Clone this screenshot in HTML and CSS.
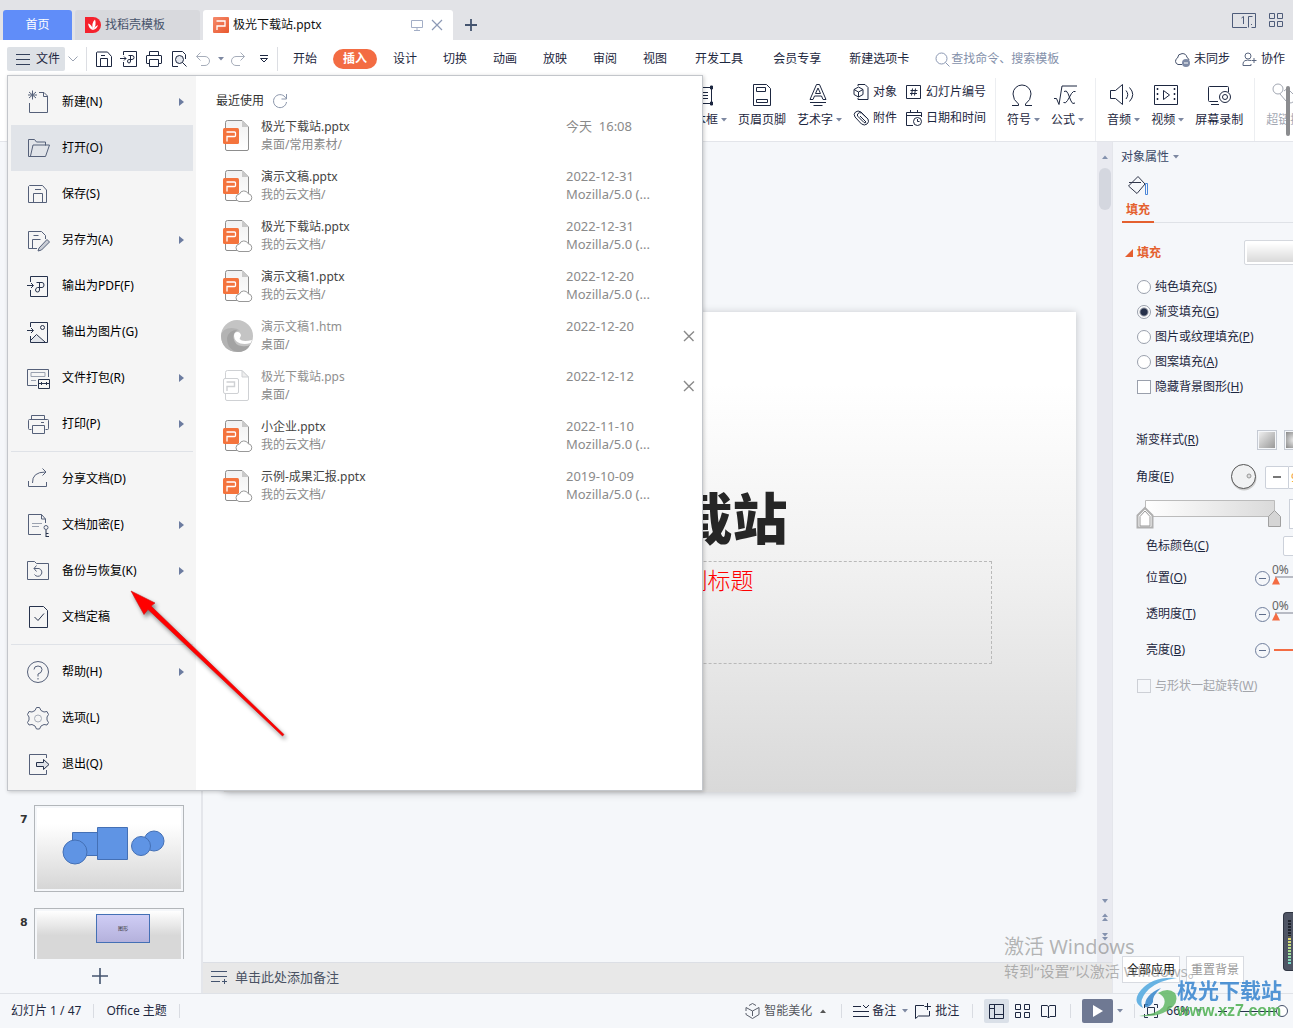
FILE: index.html
```html
<!DOCTYPE html>
<html lang="zh-CN">
<head>
<meta charset="utf-8">
<title>极光下载站.pptx</title>
<link rel="stylesheet" href="styles.css">
</head>
<body>
<svg class="defs" aria-hidden="true">
  <defs>
    <linearGradient id="paper" x1="0" y1="0" x2="0" y2="1"><stop offset="0" stop-color="#f1f1f1"/><stop offset="1" stop-color="#fff"/></linearGradient>
    <linearGradient id="logo" x1="0" y1="0" x2="1" y2="1"><stop offset="0" stop-color="#f58a6c"/><stop offset="1" stop-color="#e9582d"/></linearGradient>
  </defs>
  <symbol id="i-ppt" viewBox="0 0 32 34">
    <path d="M4.500 3.500a2 2 0 0 1 2-2H21l6.500 6.500v22a1.500 1.500 0 0 1-1.500 1.500H6a1.500 1.500 0 0 1-1.500-1.500z" fill="url(#paper)" stroke="#8d8d8d"/>
    <path d="M21 1.500V8h6.500z" fill="#c9c9c9"/>
    <rect x="2" y="9" width="16" height="16" rx="1.500" fill="#f4733c"/>
    <path d="M5.500 13H13.500q1 0 1 1v2.500q0 1-1 1H6v5" fill="none" stroke="#fff" stroke-width="1.300"/>
  </symbol>
  <symbol id="i-cloud" viewBox="0 0 32 34">
    <path d="M18 32.500a3.800 3.800 0 0 1 .5-7.500 4.700 4.700 0 0 1 8.700-.3 4 4 0 0 1 .8 7.800z" fill="#fff" stroke="#999"/>
  </symbol>
  <symbol id="i-caret" viewBox="0 0 6 4"><path d="M0 0h6L3 3.500z" fill="currentColor"/></symbol>
  <symbol id="i-save" viewBox="0 0 18 18"><path d="M1.500 2.500v14h15V6.500l-4-4.500H2zM5.500 16.500v-8h7v8M6 5.500h4" fill="none" stroke="currentColor"/></symbol>
  <symbol id="i-pdf" viewBox="0 0 24 24"><path d="M4.500 8V2.500h17v20h-17V16M1 11.500h6M5 9l2.500 2.500L5 14M10.500 8.500h5.500q2 0 2 2.500t-2 2.500h-3M13.500 8.500V16q0 2-2 2t-2-2 2-2.500h2" fill="none" stroke="currentColor"/></symbol>
  <symbol id="i-print" viewBox="0 0 24 24"><path d="M5.500 7.500v-4h13v4M5.500 17.500h-2q-1 0-1-1v-8q0-1 1-1h18q1 0 1 1v8q0 1-1 1h-2M6.500 13.500h12v8h-12zM15 10.500h3" fill="none" stroke="currentColor"/></symbol>
</svg>

<div class="app">
  <header class="titlebar">
    <button class="tab tab-home">首页</button>
    <button class="tab tab-template">
      <svg width="16" height="16" viewBox="0 0 16 16"><path d="M0 0h8a8 8 0 0 1 0 16H0z" fill="#f5222d"/><path d="M8 13Q4 12 3 6.500q4 1 5 6.500M8 13Q6 6 10 2.500 12 8 8 13M8 13q2-4 5-5-1 4-5 5" fill="#fff"/></svg>
      找稻壳模板
    </button>
    <div class="tab tab-file">
      <svg width="16" height="16" viewBox="0 0 16 16"><rect width="16" height="16" rx="1" fill="url(#logo)"/><path d="M3.500 4H12v5H4v4" fill="none" stroke="#fff" stroke-width="1.300"/></svg>
      <span class="tab-name">极光下载站.pptx</span>
      <svg width="12" height="12" viewBox="0 0 12 12" fill="none" stroke="#a3aec6"><path d="M.5 1.500h11v7H.5zM6 8.500v2.500M3 11.500h6"/></svg>
      <button class="bare" aria-label="关闭"><svg width="12" height="12" viewBox="0 0 12 12"><path d="M1 1l10 10M11 1L1 11" stroke="#8c99b5" stroke-width="1.200"/></svg></button>
    </div>
    <button class="bare add-tab" aria-label="新建标签"><svg width="12" height="12" viewBox="0 0 12 12"><path d="M6 0v12M0 6h12" stroke="#44546f" stroke-width="1.800"/></svg></button>
    <div class="window-tools">
      <svg width="24" height="15" viewBox="0 0 24 15" fill="none" stroke="#4e5c7a"><path d="M15 14.500H.5V.5h23v14h-4M16.500 14.500v-11h4M9.500 5l2-1.500V11M19 11.500h1"/></svg>
      <svg width="14" height="14" viewBox="0 0 14 14" fill="none" stroke="#4e5c7a"><path d="M.5.5h5v5h-5zM8.500.5h5v5h-5zM.5 8.500h5v5h-5zM8.500 8.500h5v5h-5z"/></svg>
    </div>
  </header>

  <nav class="menubar">
    <button class="file-button"><svg width="14" height="12" viewBox="0 0 14 12"><path d="M0 1.500h14M0 6.500h14M0 11.500h14" stroke="#33405a"/></svg>文件</button>
    <svg class="chev" width="10" height="6" viewBox="0 0 10 6"><path d="M.5.5L5 5 9.500.5" fill="none" stroke="#9ba3b2"/></svg>
    <span class="rule"></span>
    <div class="quick">
      <button class="bare" aria-label="保存"><svg width="18" height="18"><use href="#i-save"/></svg></button>
      <button class="bare" aria-label="输出为PDF"><svg width="18" height="18" viewBox="0 0 18 18" fill="none" stroke="currentColor"><path d="M3.500 5V1.500h13v15h-13V12M0 8.500h6M4 6.500l2 2-2 2M8.500 5.500H12q2 0 2 2t-2 2h-2M10.500 5.500V11q0 2-1.500 2t-1.500-2 3-1.500"/></svg></button>
      <button class="bare" aria-label="打印"><svg width="18" height="18" viewBox="0 0 18 18" fill="none" stroke="currentColor"><path d="M4.500 5.500v-4h9v4M4.500 13.500H2q-.5 0-.5-.5V6q0-.5.5-.5h14q.5 0 .5.500v7q0 .5-.5.500h-2.500M4.500 9.500h9v7h-9z"/></svg></button>
      <button class="bare" aria-label="打印预览"><svg width="18" height="18" viewBox="0 0 18 18" fill="none" stroke="currentColor"><path d="M8 16.500H2.500v-15h10l3 3V9"/><circle cx="9.500" cy="9.500" r="4" fill="#e5e8ee"/><path d="M12.500 12.500l4 4"/></svg></button>
      <button class="bare dim undo" aria-label="撤销"><svg width="14" height="14" viewBox="0 0 14 14" fill="none" stroke="currentColor"><path d="M4.500.5l-4 4 4 4M.5 4.500H9a4.500 4.500 0 0 1 0 9H5"/></svg><svg class="caret" width="6" height="4"><use href="#i-caret"/></svg></button>
      <button class="bare dim" aria-label="恢复"><svg width="14" height="14" viewBox="0 0 14 14" fill="none" stroke="currentColor"><path d="M9.500.5l4 4-4 4M13.500 4.500H5a4.500 4.500 0 0 0 0 9h4"/></svg></button>
      <button class="bare more" aria-label="更多"><svg width="8" height="8" viewBox="0 0 8 8" fill="none" stroke="currentColor"><path d="M0 .5h8M.5 3.500h7L4 7z"/></svg></button>
    </div>
    <span class="rule"></span>
    <div class="menu-tabs">
      <button>开始</button><button class="active"><b>插入</b></button><button>设计</button><button>切换</button><button>动画</button><button>放映</button><button>审阅</button><button>视图</button><button class="wide">开发工具</button><button class="wide">会员专享</button><button>新建选项卡</button>
    </div>
    <label class="search"><svg width="15" height="15" viewBox="0 0 15 15" fill="none" stroke="#8b98b3"><circle cx="6.500" cy="6.500" r="5.500"/><path d="M10.500 10.500l4 4"/></svg><input type="text" placeholder="查找命令、搜索模板" aria-label="查找命令"></label>
    <div class="account">
      <button class="bare"><svg width="16" height="16" viewBox="0 0 16 16"><path d="M8 13.500H4A3.500 3.500 0 0 1 3.500 7 4.800 4.800 0 0 1 13 6.500 3.500 3.500 0 0 1 15 9" fill="none" stroke="#44506a"/><circle cx="12" cy="12" r="4" fill="#7f8ba6"/><path d="M10 12h4" stroke="#fff"/></svg>未同步</button>
      <button class="bare"><svg width="15" height="15" viewBox="0 0 15 15" fill="none" stroke="#5b6780"><circle cx="6" cy="4" r="3"/><path d="M9 8.500Q1 7 1 12v1.500h8V12M12 6v5M9.500 8.500h5"/></svg>协作</button>
    </div>
  </nav>

  <section class="ribbon">
    <button class="tool"><svg width="24" height="24" viewBox="0 0 24 24" fill="none" stroke="currentColor"><path d="M3 4.500h18M3 20.500h18M4.500 4v17M20.500 4v17M9 9.500h8M9 12.500h8M9 15.500h8"/><path d="M2.500 3h3v3h-3zM19.500 3h2v3h-2zM19.500 19h2v3h-2z" fill="currentColor"/></svg><span>文本框<svg class="caret" width="6" height="4"><use href="#i-caret"/></svg></span></button>
    <button class="tool"><svg width="24" height="24" viewBox="0 0 24 24" fill="none" stroke="currentColor"><path d="M3.500 1.500h13l4 4v17h-17zM6.500 4.500h9v4h-9zM6.500 16.500h11v3h-11z"/></svg><span>页眉页脚</span></button>
    <button class="tool"><svg width="24" height="24" viewBox="0 0 24 24" fill="none" stroke="currentColor"><path d="M10.500 1.500h3l6.500 15h-3l-1.500-3.500h-7L7 16.500H4zM12 5l-2.500 5.500h5zM4 19.500h16M7.500 22.500h9"/></svg><span>艺术字<svg class="caret" width="6" height="4"><use href="#i-caret"/></svg></span></button>
    <div class="tool-stack">
      <button class="small-tool"><svg width="16" height="16" viewBox="0 0 16 16" fill="none" stroke="currentColor"><path d="M5 2V.5h7l3 3v12H5V14M5.500 3L10 5.500v5L5.500 13 1 10.500v-5zM1 5.500L5.500 8 10 5.500M5.500 8v5"/></svg>对象</button>
      <button class="small-tool"><svg width="16" height="16" viewBox="0 0 16 16" fill="none" stroke="currentColor"><path d="M14 8L8 2Q5 0 2.500 2T2 7l6.500 7q3 2 5.500 0t1-5L8.500 3Q6.500 2 5 3.500t0 3l6 6q1.500 1 2-.5L7 6"/></svg>附件</button>
    </div>
    <div class="tool-stack">
      <button class="small-tool"><svg width="16" height="16" viewBox="0 0 16 16" fill="none" stroke="currentColor"><path d="M.5 1.500h14v13H.5zM4.500 6.500h7M4 9.500h7M6.500 4.500l-1 7M9.500 4.500l-1 7"/></svg>幻灯片编号</button>
      <button class="small-tool"><svg width="16" height="16" viewBox="0 0 16 16" fill="none" stroke="currentColor"><path d="M7 15.500H.5v-13h15V7M.5 5.500h15M4.500 0v3M11.500 0v3"/><circle cx="11.500" cy="11.500" r="4"/><path d="M11.500 9v2.500h2"/></svg>日期和时间</button>
    </div>
    <span class="split"></span>
    <button class="tool"><svg width="24" height="24" viewBox="0 0 24 24" fill="none" stroke="currentColor"><path d="M2 22.500h6.500V21Q3 17 3 11a9 9 0 0 1 18 0Q21 17 15.500 21v1.500H22"/></svg><span>符号<svg class="caret" width="6" height="4"><use href="#i-caret"/></svg></span></button>
    <button class="tool"><svg width="24" height="24" viewBox="0 0 24 24" fill="none" stroke="currentColor"><path d="M0 15.500h2.500l2.500 6 3-18.500h15M10 8.500q2.500-2 4 2l3 7.500q1.500 4 4 2M21.500 8.500q-2-1-4 2l-4 7q-2 3.500-4 2"/></svg><span>公式<svg class="caret" width="6" height="4"><use href="#i-caret"/></svg></span></button>
    <span class="split"></span>
    <button class="tool"><svg width="24" height="24" viewBox="0 0 24 24" fill="none" stroke="currentColor"><path d="M.5 7.500h5l7-6v20l-7-6h-5zM16 7.500q3.500 4 0 8.500M19.500 4.500q6.500 7 0 14"/></svg><span>音频<svg class="caret" width="6" height="4"><use href="#i-caret"/></svg></span></button>
    <button class="tool"><svg width="24" height="24" viewBox="0 0 24 24" fill="none" stroke="currentColor"><path d="M.5 2.500h23v19H.5z"/><path d="M9.500 7.500l6 4.500-6 4.500z"/><path d="M3.500 5v14M20.500 5v14" stroke-dasharray="2 3" stroke-width="1.500"/></svg><span>视频<svg class="caret" width="6" height="4"><use href="#i-caret"/></svg></span></button>
    <button class="tool"><svg width="24" height="24" viewBox="0 0 24 24" fill="none" stroke="currentColor"><path d="M11 18.500H2.500q-1 0-1-1v-13q0-1 1-1h18q1 0 1 1V9M4 21.500h8"/><circle cx="18" cy="14" r="5.500"/><circle cx="18" cy="14" r="2.500"/></svg><span>屏幕录制</span></button>
    <span class="split"></span>
    <button class="tool faded"><svg width="24" height="24" viewBox="0 0 24 24" fill="none" stroke="currentColor"><circle cx="6" cy="6" r="5"/><path d="M8 11l6 7a5 5 0 0 0 8-6l-5-5q-3-2-5 1"/></svg><span>超链接</span></button>
    <span class="ribbon-scroll"></span>
  </section>

  <main class="workspace">
    <aside class="outline">
      <ol class="thumbs">
        <li><span class="num">7</span><div class="thumb"><svg viewBox="0 0 144 81" fill="#5f94e4" stroke="#4470b5"><path d="M35.500 24.500h26v23h-26z"/><path d="M60.500 19.500h30v32h-30z"/><circle cx="38" cy="44" r="12"/><circle cx="117" cy="33" r="10"/><circle cx="104" cy="38" r="9.500"/></svg></div></li>
        <li class="cut"><span class="num">8</span><div class="thumb shape-thumb"><span class="mini">图形</span></div></li>
      </ol>
      <button class="bare add-slide" aria-label="新建幻灯片"><svg width="16" height="16" viewBox="0 0 16 16"><path d="M8 0v16M0 8h16" stroke="#44546f" stroke-width="1.600"/></svg></button>
    </aside>

    <section class="center">
      <div class="stage">
        <div class="canvas">
          <article class="slide">
            <h1>极光下载站</h1>
            <p>单击此处添加副标题</p>
          </article>
        </div>
        <div class="scrollbar">
          <svg width="6" height="4" viewBox="0 0 6 4"><path d="M0 4h6L3 .5z" fill="#8492ae"/></svg>
          <span class="scroll-thumb"></span>
          <svg class="scroll-end" width="6" height="44" viewBox="0 0 6 44" fill="#8492ae"><path d="M0 1h6L3 5zM0 19h6L3 15.500zM0 23h6l-3-3.500zM0 35h6l-3 3.500zM0 39h6l-3 3.500z"/></svg>
        </div>
      </div>
      <div class="notes"><svg width="17" height="14" viewBox="0 0 17 14" stroke="#44546f"><path d="M0 1.500h16M0 6.500h16M0 11.500h9M11 11.500h5M13.500 9v5"/></svg>单击此处添加备注</div>
    </section>

    <aside class="props">
      <h2>对象属性<svg class="caret" width="6" height="4"><use href="#i-caret"/></svg></h2>
      <div class="prop-tabs"><button><svg width="22" height="22" viewBox="0 0 22 22" fill="none" stroke="#30364a"><path d="M1.500 11L11 1.500l7 7.500-8 9.500zM2 7.500h12"/><path d="M18.500 8.500h2v11h-2z" stroke="#4a86d8"/></svg>填充</button></div>
      <h3><svg width="8" height="8" viewBox="0 0 8 8"><path d="M8 0v8H0z" fill="#e45f30"/></svg>填充<span class="swatch"></span></h3>
      <div class="choices">
        <label><input type="radio" name="fill">纯色填充(<u>S</u>)</label>
        <label><input type="radio" name="fill" checked>渐变填充(<u>G</u>)</label>
        <label><input type="radio" name="fill">图片或纹理填充(<u>P</u>)</label>
        <label><input type="radio" name="fill">图案填充(<u>A</u>)</label>
        <label><input type="checkbox">隐藏背景图形(<u>H</u>)</label>
      </div>
      <div class="row style-row"><span>渐变样式(<u>R</u>)</span><button class="grad" aria-label="线性渐变"></button><button class="grad radial" aria-label="射线渐变"></button></div>
      <div class="row angle-row"><span>角度(<u>E</u>)</span><svg width="28" height="28" viewBox="0 0 28 28"><circle cx="14" cy="15" r="12.500" fill="#ccc"/><circle cx="13.500" cy="13.500" r="12" fill="#f1f2f3" stroke="#555"/><circle cx="19" cy="13" r="2" fill="#ddd" stroke="#999"/></svg><button class="step" aria-label="减小角度"><svg width="8" height="2"><path d="M0 1h8" stroke="#777" stroke-width="2"/></svg></button><input class="angle" type="text" value="90" aria-label="角度"></div>
      <div class="row bar-row"><svg width="146" height="30" viewBox="0 0 146 30"><defs><linearGradient id="ramp"><stop offset="0" stop-color="#fff"/><stop offset="1" stop-color="#dadada"/></linearGradient></defs><path d="M9.500 1.500h129v16H9.500z" fill="url(#ramp)" stroke="#bbb"/><path d="M1.500 16.500L9 9l7.500 7.500V28.500h-15z" fill="#fff" stroke="#b0b0b0" stroke-width="2"/><path d="M4 27V17.500L9 12l5 5.500V27z" fill="#fff" stroke="#999"/><path d="M132.500 17.500L138.500 11.500l6 6v10h-12z" fill="#d5d5d5" stroke="#a0a0a0"/></svg><span class="stop-tools"></span></div>
      <div class="row color-row"><span>色标颜色(<u>C</u>)</span><button class="color" aria-label="色标颜色"></button></div>
      <div class="row slide-row"><label for="pos">位置(<u>O</u>)</label><button class="minus" aria-label="减小位置"></button><span class="range"><output>0%</output><input id="pos" type="range" value="0"></span></div>
      <div class="row slide-row"><label for="alpha">透明度(<u>T</u>)</label><button class="minus" aria-label="减小透明度"></button><span class="range"><output>0%</output><input id="alpha" type="range" value="0"></span></div>
      <div class="row slide-row"><label for="light">亮度(<u>B</u>)</label><button class="minus" aria-label="减小亮度"></button><input id="light" class="warm" type="range" value="100"></div>
      <label class="rotate"><input type="checkbox" disabled>与形状一起旋转(<u>W</u>)</label>
      <div class="prop-buttons"><button>全部应用</button><button disabled>重置背景</button></div>
    </aside>
  </main>

  <footer class="status">
    <span>幻灯片 1 / 47</span><span class="tick"></span><span>Office 主题</span><span class="tick"></span>
    <div class="status-right">
      <button class="bare soft"><svg width="15" height="16" viewBox="0 0 15 16" fill="none" stroke="#5a5f6b"><path d="M4 2.500L7.500.5 11 2.500M1 8V4.500L7.500 8 14 4.500v7L7.500 15.500 1 11.500V10M7.500 8v5"/></svg>智能美化<svg class="up" width="6" height="4" viewBox="0 0 6 4"><path d="M0 4h6L3 .5z" fill="#555"/></svg></button>
      <span class="tick"></span>
      <button class="bare remark"><svg width="17" height="14" viewBox="0 0 17 14" fill="none" stroke="currentColor"><path d="M0 2.500h8M0 7.500h16M0 12.500h16M10 1l3 3 3-3"/></svg>备注<svg class="caret" width="6" height="4"><use href="#i-caret"/></svg></button>
      <button class="bare comment"><svg width="16" height="16" viewBox="0 0 16 16" fill="none" stroke="currentColor"><path d="M9 2.500H.5v13l3-2.500h11V8M9.500 3.500h6.500M12.500 0v7"/></svg>批注</button>
      <span class="tick"></span>
      <div class="views">
        <button class="bare on" aria-label="普通视图"><svg width="15" height="15" viewBox="0 0 15 15" fill="none" stroke="currentColor"><path d="M.5.5h14v14H.5zM5.500.5v14M5.500 10.500h9M.5 4.500h5"/></svg></button>
        <button class="bare" aria-label="幻灯片浏览"><svg width="15" height="14" viewBox="0 0 15 14" fill="none" stroke="currentColor"><path d="M.5.5h5v5h-5zM9.500.5h5v5h-5zM.5 8.500h5v5h-5zM9.500 8.500h5v5h-5z"/></svg></button>
        <button class="bare" aria-label="阅读视图"><svg width="15" height="15" viewBox="0 0 15 15" fill="none" stroke="currentColor"><path d="M.5 1.500H6l1.500 1 1.500-1h5.500v11H9l-1.500 1.500L6 12.500H.5zM7.500 2.500V14"/></svg></button>
      </div>
      <span class="tick"></span>
      <button class="play" aria-label="放映"><svg width="10" height="12" viewBox="0 0 10 12"><path d="M0 0l10 6-10 6z" fill="#fff"/></svg></button>
      <svg class="caret" width="6" height="4"><use href="#i-caret"/></svg>
      <span class="tick fit-tick"></span>
      <svg width="14" height="14" viewBox="0 0 14 14" fill="none" stroke="#26324c"><path d="M.5 4V.5H4M10 .5h3.500V4M13.500 10v3.500H10M4 13.500H.5V10M3.500 3.500h7v7h-7z"/></svg>
      <button class="bare percent">66%<svg class="caret" width="6" height="4"><use href="#i-caret"/></svg></button>
      <input class="zoom" type="range" value="100" aria-label="缩放">
    </div>
  </footer>
</div>

<section class="file-menu">
  <ul class="commands">
    <li><button><svg width="24" height="24" viewBox="0 0 24 24" fill="none" stroke="currentColor"><path d="M3.500 13v9.500h18V6l-3.500-3.500h-5M17.500 2.500V6.500h4M6.500.5v9M2 5h9M3 2l7 6M10 2L3 8"/></svg>新建(N)<i></i></button></li>
    <li><button class="hover"><svg width="24" height="24" viewBox="0 0 24 24" fill="none" stroke="currentColor"><path d="M19.500 9.500V6H10.500l-2-2.500h-6V20.500h17l4-11.500H7L4.500 20"/></svg>打开(O)</button></li>
    <li><button><svg width="24" height="24" viewBox="0 0 24 24" fill="none" stroke="currentColor"><path d="M2.500 4.500v16h18V8l-4-4.500H3.500zM7.500 20.500v-9h9v9M9 7.500h6"/></svg>保存(S)</button></li>
    <li><button><svg width="24" height="24" viewBox="0 0 24 24" fill="none" stroke="currentColor"><path d="M11 20.500H2.500v-17h13l4 4V11M6.500 20v-8.500h8M7.500 7.500h5"/><path d="M13 20l8-8.500 2.500 2.500-8 8-3.500 1z" fill="#c9cdd5"/></svg>另存为(A)<i></i></button></li>
    <li><button class="strong"><svg width="24" height="24"><use href="#i-pdf"/></svg>输出为PDF(F)</button></li>
    <li><button class="strong"><svg width="24" height="24" viewBox="0 0 24 24" fill="none" stroke="currentColor"><path d="M4 22l6-7 8 7z" fill="#e1e4ea" stroke="none"/><path d="M4.500 7V2.500h17v20h-17V16M1 10.500h6M5 8l2.500 2.500L5 13M5 20l5.500-5.500 8.500 7.500"/><circle cx="16.500" cy="7.500" r="2"/></svg>输出为图片(G)</button></li>
    <li><button><svg width="24" height="24" viewBox="0 0 24 24" fill="none" stroke="currentColor"><path d="M11 19.500H1.500v-16h21V11"/><path d="M5 6.500h14v4H5zM5 14.500h5" stroke="#9aa1af"/><path d="M12.500 13.500h11v9h-11zM12.500 17.500h11M15.500 16v3M20.500 16v3" stroke="#26324c"/></svg>文件打包(R)<i></i></button></li>
    <li><button><svg width="24" height="24"><use href="#i-print"/></svg>打印(P)<i></i></button></li>
    <li class="line"></li>
    <li><button><svg width="24" height="24" viewBox="0 0 24 24" fill="none" stroke="currentColor"><path d="M2.500 14v5.500h18V15M6.500 16Q6 5 19.500 5M16.500 1.500L20 5l-3.500 3.500"/></svg>分享文档(D)</button></li>
    <li><button><svg width="24" height="24" viewBox="0 0 24 24" fill="none" stroke="currentColor"><path d="M15 21.500H2.500v-20h13l4 4.500v4M15.500 1.500V6h4"/><path d="M6 10.500h10M6 13.500h7" stroke="#9aa1af"/><path d="M20 17v7M20 20.500h2.500M20 23.500h3" stroke="#26324c"/><circle cx="20" cy="14.500" r="2"/></svg>文档加密(E)<i></i></button></li>
    <li><button><svg width="24" height="24" viewBox="0 0 24 24" fill="none" stroke="currentColor"><path d="M1.500 2.500h7l2 2h12v16h-21zM8 9.500h5a4 4 0 1 1-4.500 6M10.500 6.500L8 9.500l2.500 3"/></svg>备份与恢复(K)<i></i></button></li>
    <li><button class="strong"><svg width="24" height="24" viewBox="0 0 24 24" fill="none" stroke="currentColor"><path d="M3.500 1.500h14l4 4v17h-18zM8.500 12l3.500 3.500 6-7"/></svg>文档定稿</button></li>
    <li class="line"></li>
    <li><button><svg width="24" height="24" viewBox="0 0 24 24" fill="none" stroke="currentColor"><circle cx="12" cy="12" r="10.500"/><path d="M8 9.500Q8 6 12 6t4 3.500-4 4.500v2.500M12 18v1.500"/></svg>帮助(H)<i></i></button></li>
    <li><button><svg width="24" height="24" viewBox="0 0 24 24" fill="none" stroke="currentColor"><path d="M10.500 1.500h3l1.500 3 3 1.500 3-.5 1.500 3-1.500 2.500v3l1.500 2.500-1.500 2.500-3-.5-3 1.500-1.500 3h-3L9 20l-3-1.500-3 .5-1.500-2.500L3 14v-3L1.500 8.500 3 5.500l3 .5 3-1.500z"/><circle cx="12" cy="12.500" r="3.500" stroke="#a7adb8"/></svg>选项(L)</button></li>
    <li><button><svg width="24" height="24" viewBox="0 0 24 24" fill="none" stroke="currentColor"><path d="M20.500 6V2.500h-17v20h17V18"/><path d="M10.500 10.500h7V7.500l5.500 5-5.500 5v-3h-7z" fill="#dfe2e8" stroke="#26324c"/></svg>退出(Q)</button></li>
  </ul>
  <div class="recent">
    <h2>最近使用<svg width="16" height="16" viewBox="0 0 16 16" fill="none" stroke="#8b96ab"><path d="M14 5.500A6.500 6.500 0 1 0 14.500 9M14.500 1v5h-5"/></svg></h2>
    <ul>
      <li><svg width="32" height="34"><use href="#i-ppt"/></svg><a href="#"><b>极光下载站.pptx</b>桌面/常用素材/</a><span class="when">今天&nbsp; 16:08</span></li>
      <li><svg width="32" height="34"><use href="#i-ppt"/><use href="#i-cloud"/></svg><a href="#"><b>演示文稿.pptx</b>我的云文档/</a><span class="when">2022-12-31<br>Mozilla/5.0 (...</span></li>
      <li><svg width="32" height="34"><use href="#i-ppt"/><use href="#i-cloud"/></svg><a href="#"><b>极光下载站.pptx</b>我的云文档/</a><span class="when">2022-12-31<br>Mozilla/5.0 (...</span></li>
      <li><svg width="32" height="34"><use href="#i-ppt"/><use href="#i-cloud"/></svg><a href="#"><b>演示文稿1.pptx</b>我的云文档/</a><span class="when">2022-12-20<br>Mozilla/5.0 (...</span></li>
      <li class="gone"><svg width="32" height="34" viewBox="0 0 32 34"><circle cx="16" cy="17" r="16" fill="#c4c4c4"/><path d="M0 17Q1 9 11 9q5 0 8 2.500-6 0-7 5.500-1 7 6 10.500 5 2 10-.5-4 6-12 6Q1 32 0 17z" fill="#b3b3b3"/><path d="M6 19Q8 11 16 11q-4 3-3.500 8 1 7 8 8 5 1 8.500-1-3 7-12 7Q6 31 6 19z" fill="#a3a3a3"/><path d="M13 17q0-4 3.500-4 3 0 3.500 3.500-1 2-1.500 3.500 3 3.500 12.500 1-.5 1.500-1.500 3-5 1.500-10 .5-6-2-6.500-7.500z" fill="#fff"/></svg><a href="#"><b>演示文稿1.htm</b>桌面/</a><span class="when">2022-12-20</span><button class="bare" aria-label="移除"><svg width="12" height="12" viewBox="0 0 12 12"><path d="M1 1l9.500 10M11 1.500L1 11" fill="none" stroke="#8a8a8a" stroke-width="1.400"/></svg></button></li>
      <li class="gone"><svg width="32" height="34" viewBox="0 0 32 34" fill="#fff" stroke="#cfd1d4"><path d="M4.500 3.500a2 2 0 0 1 2-2H21l6.500 6.500v22a1.500 1.500 0 0 1-1.500 1.500H6a1.500 1.500 0 0 1-1.500-1.500z"/><path d="M21 1.500V8h6.500z" fill="#eee"/><rect x="2.500" y="9.500" width="15" height="15" rx="1.500"/><path d="M5.500 13h8v4.500H6V22" fill="none" stroke-width="1.400"/></svg><a href="#"><b>极光下载站.pps</b>桌面/</a><span class="when">2022-12-12</span><button class="bare" aria-label="移除"><svg width="12" height="12" viewBox="0 0 12 12"><path d="M1 1l9.500 10M11 1.500L1 11" fill="none" stroke="#8a8a8a" stroke-width="1.400"/></svg></button></li>
      <li><svg width="32" height="34"><use href="#i-ppt"/><use href="#i-cloud"/></svg><a href="#"><b>小企业.pptx</b>我的云文档/</a><span class="when">2022-11-10<br>Mozilla/5.0 (...</span></li>
      <li><svg width="32" height="34"><use href="#i-ppt"/><use href="#i-cloud"/></svg><a href="#"><b>示例-成果汇报.pptx</b>我的云文档/</a><span class="when">2019-10-09<br>Mozilla/5.0 (...</span></li>
    </ul>
  </div>
</section>

<svg class="arrow" width="170" height="160" viewBox="0 0 170 160"><path d="M6 5l24 12-4 3L159 148.500l-1.500 1.500L23 23.500l-4 5z" fill="#f00" stroke="#c11" stroke-width=".6"/></svg>

<div class="activate"><strong>激活 Windows</strong><span>转到“设置”以激活 Windows。</span></div>

<div class="meter"><i></i></div>

<div class="brand">
  <svg width="44" height="42" viewBox="0 0 44 42"><path d="M42 2Q18 0 6 14-4 26 8 32 3 24 14 13 25 4 42 2z" fill="#4fa8e0"/><path d="M23 17q10-6 17 0 6 12-12 20-10 4-24 3 18-2 24-9 5-9-5-14z" fill="#62b865"/><path d="M10 31Q9 19 26 12q-9 8-8 14-3 6-8 5z" fill="#3486cc"/></svg>
  <div><strong>极光下载站</strong><span>www.xz7.com</span></div>
</div>
</body>
</html>
```
FILE: styles.css
```css
* { box-sizing: border-box; }

body {
  margin: 0;
  position: relative;
  overflow: hidden;
  font: 12px/18px "Noto Sans", "Noto Sans CJK SC", sans-serif;
  color: #1d2740;
  background: #f5f7fa;
}

button, input, output { font: inherit; color: inherit; }
button { border: 0; padding: 0; background: none; white-space: nowrap; }
h1, h2, h3, p, ul, ol { margin: 0; padding: 0; font: inherit; }
ul, ol { list-style: none; }
svg { flex: none; display: block; }
.defs { position: absolute; width: 0; height: 0; }
.bare { display: flex; align-items: center; gap: 4px; }
.caret { color: #7d88a1; }

.app { display: flex; flex-direction: column; min-height: 100vh; }

/* Title bar */
.titlebar { display: flex; align-items: flex-end; gap: 3px; height: 40px; padding-left: 3px; background: #e2e3e7; }
.tab { display: flex; align-items: center; height: 30px; border-radius: 3px 3px 0 0; }
.tab-home { width: 69px; justify-content: center; color: #fff; background: #608df9; }
.tab-template { width: 125px; padding-left: 10px; gap: 4px; color: #47536b; background: #d8d9dd; }
.tab-file { width: 250px; padding: 0 10px; gap: 4px; color: #111; background: #fff; }
.tab-name { flex: 1; }
.tab-file .bare { margin-left: 4px; }
.add-tab { height: 30px; margin-left: 9px; }
.window-tools { display: flex; align-items: center; gap: 13px; height: 40px; margin-left: auto; padding-right: 10px; }

/* Menu bar */
.menubar { display: flex; align-items: center; height: 38px; padding: 0 8px 0 7px; background: #fff; }
.file-button { display: flex; align-items: center; gap: 6px; width: 58px; height: 24px; padding-left: 9px; border-radius: 2px; background: #dde1e6; }
.chev { margin: 0 8px 0 3px; }
.rule { width: 1px; height: 24px; background: #dcdee3; }
.quick { display: flex; align-items: center; gap: 7px; width: 190px; padding-left: 8px; }
.dim { color: #a6adba; }
.undo { margin-left: 1px; }
.more { margin-left: 8px; }
.menu-tabs { display: flex; align-items: center; padding-left: 2px; }
.menu-tabs button { padding: 0 13px; }
.menu-tabs .wide { padding: 0 15px; }
.menu-tabs .active { width: 44px; height: 20px; margin: 0 3px; padding: 0; border-radius: 10px; color: #fff; background: #f36c43; }
.search { display: flex; align-items: center; gap: 1px; margin-left: 13px; }
.search input { width: 130px; padding: 0; border: 0; outline: 0; background: none; }
.search input::placeholder { color: #8490aa; opacity: 1; }
.account { display: flex; gap: 12px; margin-left: auto; }

/* Ribbon */
.ribbon { display: flex; gap: 11px; height: 64px; padding: 5px 0 0 682px; overflow: hidden; background: #fff; border-bottom: 1px solid #e3e5ea; position: relative; }
.tool { flex: none; display: flex; flex-direction: column; gap: 4px; }
.tool > svg { align-self: center; }
.tool:has(.caret) > svg { margin-right: 4px; }
.tool span { display: flex; align-items: center; gap: 3px; }
.tool span .caret { margin-left: 0; }
.tool-stack { flex: none; display: flex; flex-direction: column; gap: 8px; margin-right: -2px; }
.small-tool { display: flex; align-items: center; gap: 4px; height: 18px; }
.split { flex: none; width: 1px; height: 64px; margin-top: -5px; background: #eceef1; }
.faded { color: #a3a8b3; }
.ribbon-scroll { position: absolute; right: 3px; top: 8px; width: 4px; height: 50px; border-radius: 2px; background: #8b8c8f; }

/* Workspace */
.workspace { flex: 1; display: grid; grid-template-columns: 201px 1fr 181px; min-height: 0; }
.outline { display: flex; flex-direction: column; }
.thumbs { display: flex; flex-direction: column; gap: 16px; margin-top: auto; }
.thumbs li { display: flex; gap: 6px; padding: 0 17px 0 20px; }
.num { width: 8px; padding-top: 6px; font: bold 11px/18px "DejaVu Sans", sans-serif; color: #333; }
.thumb { flex: 1; height: 87px; padding: 2px; border: 1px solid #b2b6ba; background: linear-gradient(#fff 20%, #d6d6d6) content-box; }
.cut { height: 51px; overflow: hidden; }
.shape-thumb { display: flex; justify-content: center; align-items: flex-start; background: linear-gradient(#fff, #d8d8d8 30%) content-box; }
.mini { width: 54px; height: 29px; margin: 3px 0 0 28px; border: 1px solid #4470b5; background: linear-gradient(#cfcdf5, #b4b1dc); text-align: center; font-size: 5px; line-height: 26px; color: #333; }
.add-slide { height: 34px; padding-right: 2px; justify-content: center; }
.center { display: flex; flex-direction: column; border-left: 2px solid #e4e6eb; min-width: 0; }
.stage { flex: 1; display: flex; }
.canvas { flex: 1; display: flex; align-items: center; padding: 0 21px; }
.slide { width: 100%; aspect-ratio: 16 / 9; padding-top: 164px; text-align: center; background: linear-gradient(#fff 15%, #f0f0f0 55%, #d9d9d9); box-shadow: 0 1px 8px #bfc1c5; }
.slide h1 { font: 900 55px/78px "Noto Sans CJK SC", sans-serif; color: #262626; }
.slide p { width: 684px; max-width: 90%; height: 103px; margin: 7px auto 0; border: 1px dashed #b9b9b9; font: 300 23px/34px "Noto Sans CJK SC", sans-serif; color: #f00; }
.scrollbar { display: flex; flex-direction: column; align-items: center; width: 15px; padding: 13px 0 20px; background: #e9eaf0; }
.scroll-thumb { width: 12px; height: 42px; margin-top: 9px; border-radius: 6px; background: #d4d7df; }
.scroll-end { margin-top: auto; }
.notes { display: flex; align-items: center; gap: 7px; height: 31px; padding: 0 0 2px 8px; border-top: 1px solid #dcdfe5; background: #e8e8e8; font-size: 13px; color: #4a5263; }

/* Property pane */
.props { display: flex; flex-direction: column; overflow: hidden; border-left: 1px solid #e4e6eb; white-space: nowrap; }
.props h2 { display: flex; align-items: center; gap: 4px; height: 30px; padding-left: 8px; color: #3a4866; }
.prop-tabs { height: 51px; margin-left: 9px; border-bottom: 1px solid #dfe2e7; }
.prop-tabs button { display: flex; flex-direction: column; align-items: center; gap: 4px; width: 32px; height: 51px; padding-top: 3px; border-bottom: 2px solid #e4602f; color: #e4602f; font-weight: bold; }
.props h3 { display: flex; align-items: center; gap: 4px; height: 25px; margin-top: 17px; padding-left: 12px; color: #e4602f; font-weight: bold; }
.swatch { flex: none; width: 80px; height: 25px; margin-left: 79px; padding: 2px; border: 1px solid #d5d8de; border-radius: 2px; background: linear-gradient(#fff, #d9d9d9) content-box, linear-gradient(#fff, #fff) padding-box; }
.choices { margin-top: 9px; padding-left: 24px; }
.choices label, .rotate { display: flex; align-items: center; height: 25px; }
.choices input, .rotate input { appearance: none; flex: none; width: 14px; height: 14px; margin: 0 4px 0 0; border: 1px solid #9aa0ac; background: #fff; }
.choices input[type=radio] { border-radius: 50%; }
.choices input[type=radio]:checked { background: radial-gradient(circle, #26304a 3px, #fff 5px); }
.row { display: flex; align-items: center; padding-left: 23px; }
.row > * { flex: none; }
.row > span:first-child, .row > label { width: 121px; }
.style-row { height: 24px; margin-top: 29px; }
.grad { width: 20px; height: 20px; margin-right: 7px; padding: 1px; border: 1px solid #c5cad3; background: linear-gradient(135deg, #eee, #999) content-box; }
.radial { background: radial-gradient(#eee, #888) content-box; }
.angle-row { height: 26px; margin-top: 12px; }
.angle-row > span:first-child { width: 94px; }
.step { display: flex; align-items: center; justify-content: center; width: 24px; height: 23px; margin-left: 7px; border: 1px solid #ccd1da; border-radius: 2px 0 0 2px; background: #fff; }
.angle { width: 40px; height: 23px; margin: 0; padding: 0 2px; border: 1px solid #ccd1da; border-left: 0; color: #f4a13a; }
.bar-row { height: 30px; margin-top: 9px; }
.stop-tools { width: 30px; height: 30px; margin-left: 7px; border: 1px solid #ccd1da; background: #fff; }
.color-row { height: 22px; margin-top: 6px; padding-left: 33px; }
.color-row > span:first-child { width: 137px; }
.color { width: 60px; height: 20px; border: 1px solid #ccd1da; border-radius: 2px; background: #fff; }
.slide-row { height: 36px; padding-left: 33px; }
.color-row + .slide-row { margin-top: 3px; }
.slide-row > label { width: 109px; }
.minus { width: 15px; height: 15px; margin-right: 2px; border: 1px solid #6f7e9c; border-radius: 50%; background: linear-gradient(#5f6e8c, #5f6e8c) center / 7px 1px no-repeat; }
.range { display: flex; flex-direction: column; margin-bottom: 8px; color: #666; line-height: 13px; }
.range input { appearance: none; width: 80px; height: 9px; margin: 0; background: linear-gradient(#b8bbc4, #b8bbc4) 3px 0 / 100% 2px no-repeat; }
.range input::-webkit-slider-thumb { appearance: none; width: 8px; height: 8px; background: #f36c43; clip-path: polygon(50% 0, 100% 100%, 0 100%); }
.warm { appearance: none; width: 80px; height: 2px; margin: 0 0 0 2px; background: #f36c43; }
.warm::-webkit-slider-thumb { appearance: none; width: 8px; height: 8px; }
.rotate { margin-top: 5px; padding-left: 24px; color: #a3a5aa; }
.rotate input { border-color: #cdd0d6; background: #f5f7fa; }
.prop-buttons { display: flex; gap: 6px; margin-top: auto; padding: 0 0 10px 9px; }
.prop-buttons button { width: 58px; height: 27px; border: 1px solid #d8dbe1; background: #fff; color: #111; }
.prop-buttons button:disabled { color: #999; }

/* Status bar */
.status { display: flex; align-items: center; height: 35px; gap: 12px; padding-left: 11px; border-top: 1px solid #dfe2e7; }
.tick { flex: none; width: 1px; height: 14px; background: #d9dce2; }
.status-right { display: flex; align-items: center; gap: 11px; margin-left: auto; padding-right: 5px; }
.soft { color: #55585f; }
.up { margin: 0 4px; }
.status-right .bare:has(.caret) { gap: 2px; }
.remark { margin-right: -4px; }
.comment { margin-right: 2px; }
.bare > .caret { margin-left: 4px; }
.views { display: flex; gap: 1px; margin-right: -2px; }
.views button { justify-content: center; width: 25px; height: 24px; }
.views .on { border-radius: 2px; background: #dae0e8; }
.play { display: flex; align-items: center; justify-content: center; width: 31px; height: 24px; margin-right: -7px; border-radius: 2px; background: #6f7993; }
.fit-tick { margin-right: -2px; }
.percent { margin: 0 5px 0 -3px; }
.zoom { appearance: none; width: 70px; height: 12px; margin: 0; background: linear-gradient(#26324c, #26324c) 0 6px / 9px 1px no-repeat, linear-gradient(#26324c, #26324c) 22px 6px / 42px 1px no-repeat; }
.zoom::-webkit-slider-thumb { appearance: none; width: 12px; height: 12px; border: 1px solid #44506a; border-radius: 50%; background: #fff; }

/* File menu, open over the workspace */
.file-menu { position: absolute; left: 7px; top: 75px; display: flex; width: 696px; border: 1px solid #c3c6cb; background: #fff; box-shadow: 1px 1px 4px #0003; }
.commands { width: 188px; padding: 3px; background: #f5f5f5; }
.commands button { display: flex; align-items: center; gap: 12px; width: 100%; height: 46px; padding: 0 9px 0 15px; color: #000; }
.commands button svg { color: #556079; }
.commands .strong svg { color: #26324c; }
.commands .hover { background: #e1e4e9; }
.commands i { margin-left: auto; border: 4px solid transparent; border-left: 5px solid #6c7ca0; border-right: 0; }
.line { height: 1px; margin: 4px 0; background: #dfe2e7; }
.recent { flex: 1; }
.recent h2 { display: flex; align-items: center; gap: 8px; height: 35px; padding: 14px 0 0 20px; color: #333; }
.recent li { display: grid; grid-template-columns: 40px 1fr 117px 12px; align-items: center; height: 50px; padding: 0 7px 0 25px; color: #8a8a8a; }
.recent a { color: #8a8a8a; text-decoration: none; }
.recent b { display: block; font-weight: normal; color: #444; }
.recent .gone b { color: #8f8f8f; }
.when { align-self: start; padding-top: 6px; font-size: 13px; }

/* Pointer, badges and desktop overlays */
.arrow { position: absolute; left: 125px; top: 586px; filter: drop-shadow(2px 3px 2px #0007); }
.activate { position: absolute; left: 1004px; top: 933px; display: flex; flex-direction: column; color: #7778; white-space: nowrap; pointer-events: none; }
.activate strong { font-size: 20px; font-weight: 400; line-height: 28px; }
.activate span { font-size: 15px; line-height: 20px; }
.meter { position: absolute; right: 0; top: 912px; width: 10px; height: 59px; padding: 7px 2px 5px 4px; border: 1px solid #2f3542; border-right: 0; border-radius: 4px 0 0 4px; background: #4f5564; }
.meter i { display: block; height: 100%; background: repeating-linear-gradient(#0000 0 2px, #4f5564 2px 3px), linear-gradient(#20242e 35%, #e3d66b 40%, #a8dd8f 70%, #6fd6d0); }
.brand { position: absolute; right: 11px; top: 976px; display: flex; opacity: .85; white-space: nowrap; pointer-events: none; }
.brand div { display: flex; flex-direction: column; margin-left: -2px; }
.brand strong { font: bold 21px/26px "Noto Sans CJK SC", sans-serif; color: #3684cf; }
.brand span { font: bold 16px/18px "Liberation Sans", sans-serif; color: #4cb050; }
```
